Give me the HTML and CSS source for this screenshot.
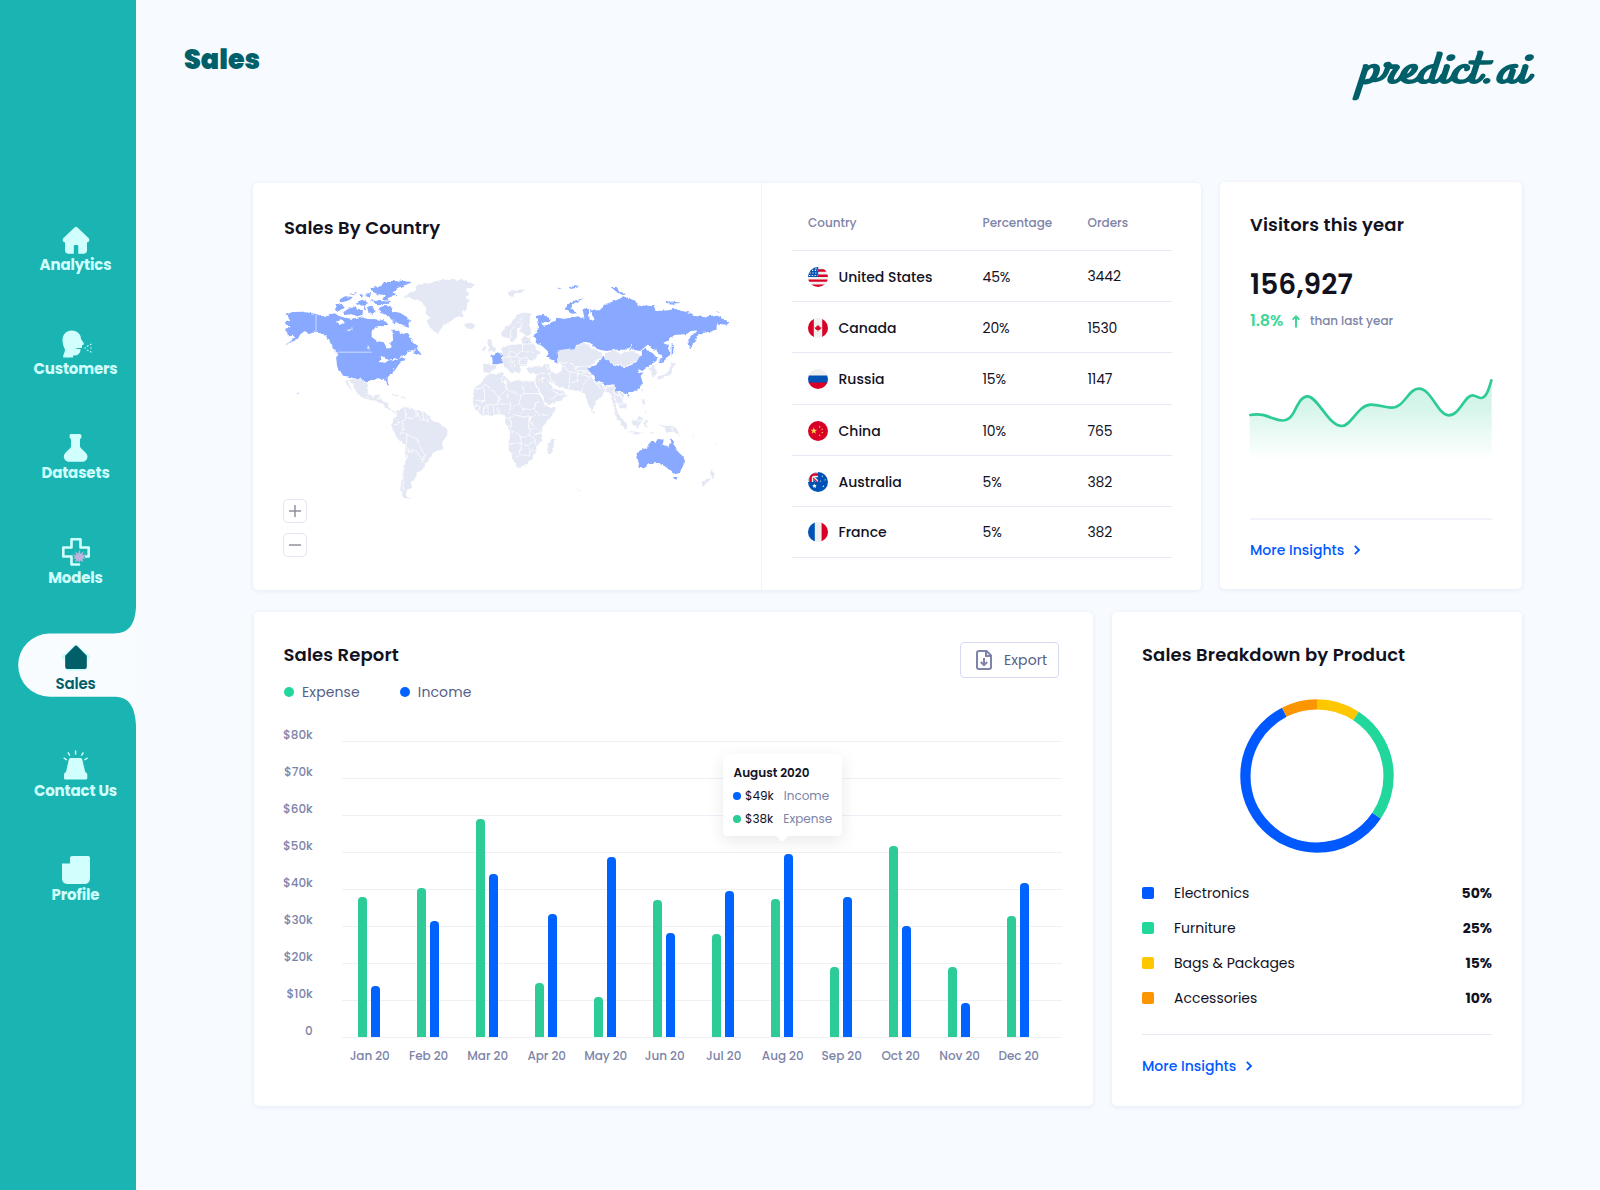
FILE: index.html
```html
<!DOCTYPE html>
<html lang="en">
<head>
<meta charset="utf-8">
<title>Sales - predict.ai</title>
<link rel="stylesheet" href="styles.css">
</head>
<body>
<div class="app">
  <nav class="sidebar">
    <a class="nav-item">
      <svg class="nav-icon" viewBox="0 0 28 28"><path d="M12.8 1.2Q14 .2 15.2 1.2L27 12.6Q28.2 14.6 26.2 16.2H25V25Q24.6 27.6 22 27.8H16.3V20Q16 19 15 19H13Q12 19 11.8 20V27.8H6Q3.4 27.6 3 25V16.2H1.8Q-.2 14.6 1 12.6Z"/></svg>
      <span>Analytics</span>
    </a>
    <a class="nav-item">
      <svg class="nav-icon" viewBox="0 0 28 28"><path d="M9.5.5C15 .3 19 4 19 9L22 13.5Q22 15 20 15.3V18H14.5V19H18.5Q18.8 22 16.5 24.3Q14.5 25.8 11 25.5V27.5H1.2C1 24 3.6 22 2.8 19C1.2 16 .5 13 .5 9.5C1 4 4.5.7 9.5.5Z"/><path class="spray" d="M22.5 18h1.5M25 16.5l1.5-1M25 20l1.5.8M28 14.8l1.5-.7M28.2 18h1.5M28 21.5l1.5.8"/></svg>
      <span>Customers</span>
    </a>
    <a class="nav-item">
      <svg class="nav-icon" viewBox="0 0 28 28"><path d="M8.5 0H18Q19.5.3 19.5 2.5T18 5V12.5Q18.6 14 20 15.2C23 18 25.6 20 25.5 22.5C25.3 26 23 27.8 20 27.8H7.5C4.5 27.8 2 26 1.8 22.5C1.8 20 4 18 7 15.2Q8.7 14 9 12.5V5Q7.5 4.8 7.5 2.5T8.5 0Z"/></svg>
      <span>Datasets</span>
    </a>
    <a class="nav-item">
      <svg class="nav-icon" viewBox="0 0 28 28"><path class="cross" d="M17 26.5H9.5V18.5H1.3V9.5H9.5V1.3H18.5V9.5H26.7V18.5H24"/><path class="leaf" d="M17.3 11.5 18.6 16 21.6 13.2 20.5 17.2 24.4 16.2 21.4 19.2 23.6 20.6 20.2 21 21.2 24 18 22.6 17.2 26 16.4 22.6 13 24.2 14.2 21 10.8 20.6 13.2 19.2 10.4 16.2 14.2 17.2 13.2 13.2 16.2 16Z"/></svg>
      <span>Models</span>
    </a>
    <a class="nav-item active">
      <svg class="notch" viewBox="0 0 118 128"><path d="M118 0C117.6 20 113 31.5 95 31.5H31.5A31.6 31.6 0 0 0 31.5 94.7H97C113 95 117.4 108 118 127Z"/></svg>
      <svg class="nav-icon" viewBox="0 0 28 28"><path class="halo" d="M14 0 28.5 12.3 27 15.5 25 16V24Q24.6 26.5 22 26.8H6Q3.4 26.5 3 24V16L1 15.5-.5 12.3Z"/><path d="M13.1 1.8Q14 1 14.9 1.8L24.8 11.8V23Q24.6 24.8 22.8 25H5.2Q3.4 24.8 3.2 23V11.8Z"/></svg>
      <span>Sales</span>
    </a>
    <a class="nav-item">
      <svg class="nav-icon" viewBox="0 0 28 28"><path d="M8.5 7H18.5Q20 7.2 20.4 9L23.2 21Q25.3 21.3 25.3 24V27Q25.3 28.5 23.8 28.5H3.5Q2 28.5 2 27V24Q2 21.3 4 21L6.7 9Q7.1 7.2 8.5 7Z"/><path class="rays" d="M13.6-.4v4M19.4 4.6l2-3.2M22.4 9l3.2-2.2M7.9 4.6l-2-3.2M4.9 9 1.7 6.8"/></svg>
      <span>Contact Us</span>
    </a>
    <a class="nav-item">
      <svg class="nav-icon" viewBox="0 0 28 28"><path d="M10 0H26.2Q28 .2 28 2V22.5Q27.6 27.6 23 28H5Q.4 27.6 0 23V7.5H8V1.8Q8.2.2 10 0Z"/></svg>
      <span>Profile</span>
    </a>
  </nav>

  <main class="content">
    <header class="topbar">
      <h1>Sales</h1>
      <div class="logo">predict.ai</div>
    </header>

    <div class="row">
      <section class="card country-card">
        <div class="map-pane">
          <h2>Sales By Country</h2>
          <svg class="map" viewBox="40 50 1350 670">
            <defs>
              <filter id="coast" filterUnits="userSpaceOnUse" x="30" y="40" width="1370" height="690" color-interpolation-filters="sRGB">
                <feTurbulence type="fractalNoise" baseFrequency=".07" numOctaves="2" seed="4" result="n"/>
                <feDisplacementMap in="SourceGraphic" in2="n" scale="12" xChannelSelector="R" yChannelSelector="G"/>
              </filter>
            </defs>
            <g filter="url(#coast)">
              <g class="land">
                <path d="M402 108 436 88 440 74 480 66 520 58 575 58 620 74 590 86 600 100 588 108 598 122 588 132 592 146 580 152 582 166 556 172 540 184 520 196 505 220 488 210 474 188 472 180 482 172 468 160 470 144 458 126 432 118Z"/>
                <path d="M582 192 600 188 616 194 612 202 596 204ZM656 236 666 240 668 256 680 266 672 273 654 273 660 262 652 250ZM638 262 649 257 648 269 636 271Z"/>
                <path d="M240 358 270 355 282 362 292 374 294 400 310 410 318 403 333 404 326 414 340 420 356 428 358 442 372 454 382 451 378 458 362 452 346 440 340 430 314 422 300 418 276 412 256 394 250 376ZM228 358 234 360 240 378 250 390 246 391 232 374Z"/>
                <path d="M358 400 376 402 390 408 374 407ZM394 408 410 411 398 413ZM418 412l8 1-6 1Z"/>
                <path d="M380 450 404 440 440 446 472 462 490 480 530 504 536 518 522 540 520 566 490 578 480 600 466 610 456 634 440 640 440 656 424 664 426 676 412 690 408 704 424 716 404 712 392 690 398 640 406 600 408 552 386 540 366 500 370 480 382 468Z"/>
                <path d="M640 310 681 313 672 328 656 338 642 335Z"/>
                <g transform="translate(660)">
                  <path d="M54 94 74 92 78 88 108 88 96 98 80 98 72 110 60 104Z"/>
                  <path d="M36 214 60 190 80 168 104 156 122 160 120 178 124 214 110 226 92 218 94 200 82 206 82 230 70 244 60 244 60 230 40 232Z"/>
                  <path d="M34 264 56 254 98 252 96 238 104 230 118 232 126 250 134 256 136 266 156 278 138 292 128 300 112 300 112 316 94 320 90 340 78 336 58 308 54 308 76 332 66 342 48 318 36 308 40 290 38 276Z"/>
                  <path d="M110 324 128 318 152 318 176 310 184 334 206 340 216 330 214 312 206 306 204 270 254 264 276 250 300 256 334 278 338 288 320 302 300 318 294 330 306 350 316 366 350 378 376 374 382 396 404 400 400 418 412 434 408 446 396 446 386 430 378 426 376 440 388 462 376 454 368 416 358 396 346 394 318 426 306 452 298 436 286 406 276 390 242 388 210 382 190 368 178 366 194 386 216 392 232 404 206 424 172 434 160 412 136 364 142 342 116 338Z"/>
                  <path d="M309 450 316 458 311 462ZM344 280 376 270 392 280 420 272 454 282 440 304 408 318 372 310 350 296Z"/>
                  <path d="M-50 408-48 384-30 372-14 350-4 342 44 338 48 352 68 364 76 360 104 362 132 364 138 376 150 402 162 424 174 444 198 440 196 452 178 478 160 494 158 520 158 542 140 556 140 574 126 596 110 614 82 622 76 608 66 584 56 552 60 524 56 500 46 490 48 470 36 462 0 464-26 464-48 440Z"/>
                  <path d="M174 548 194 534 192 556 184 578 174 578Z"/>
                  <path d="M374 450 396 472 412 494 410 508 396 496 380 468ZM412 512 440 514 466 520 440 520ZM424 480 440 476 454 466 458 480 446 500 430 498ZM464 484 478 478 468 490 472 502 464 498ZM456 416 464 418 466 434 460 432ZM464 448 474 456 474 464ZM508 490 530 494 552 498 572 524 550 514 530 516 524 502ZM480 516 492 516 484 522Z"/>
                  <path d="M546 306 560 310 548 320 550 334 534 348 506 358 504 350 530 340 540 326ZM478 322 492 316 502 336 496 348 488 344Z"/>
                  <path d="M660 626 676 640 668 654 662 644ZM636 668 662 650 654 664 640 676ZM606 522l10 8-4 0ZM674 550l6-2-4 5ZM628 568l8 3ZM262 687h8l-4 3Z"/>
                </g>
              </g>
              <g class="borders">
                <path d="M404 440 410 470 398 484 376 490M410 470 424 476 444 466 440 448M444 466 452 480 476 478M458 454 462 480M472 464 474 482M398 484 400 504 394 516 412 522 410 552M412 522 442 536 450 562 464 580 466 592 454 596 440 572 416 572 410 556M416 572 406 600 400 640 402 690M466 592 456 604 468 614M288 404 300 418M318 418 328 412M342 422 356 428"/>
                <g transform="translate(660)">
                  <path d="M-48 384H-18L-14 372 28 408 48 390 44 366 48 352M-18 384-12 424-44 420M28 408 22 432-6 434-18 444-30 436-50 440M44 340 36 358 48 374M48 362 52 388 94 406 102 402V362M102 400H148M94 406 88 430 100 446 94 468 70 462 58 474 48 470M28 408 30 432 52 430 64 436 54 400M64 436 56 460M22 432 28 462M10 434 14 462M-6 434-4 462M-18 444-20 464M-30 440-34 456M88 430 66 446M100 446 134 448 138 428 152 424M134 448 150 466 176 460M122 470 124 490 158 520M94 468 124 470 138 466M58 474 66 484 62 512 88 520 92 530 120 528 116 490 124 470M58 550H96L110 556 138 542M92 530 96 550 90 584 78 590M110 556 122 568 116 584 92 584M122 568 140 572M120 528 136 534 136 556M120 500 136 520 158 518"/>
                  <path d="M60 240 64 210 84 184 104 166M98 200 92 180M56 254 62 274 54 288 40 292M62 274 84 278 98 274 98 252M84 278 78 290 54 288M98 274 132 276M78 290 90 296 112 290 118 302M90 296 92 312 112 314M72 300 76 320M104 256 98 252 126 250M62 292 66 308"/>
                  <path d="M140 342 178 336 170 318M178 336 184 358 196 370M164 350 180 366M142 362 164 350M184 386 206 402 232 404M178 420 206 402M206 306 240 306 260 322 308 318M214 312 242 338 268 340 300 334M242 338 236 386M268 340 262 362 244 366M302 350 284 368 276 390M268 340 302 350M240 306 262 330 290 332M316 366 340 386 370 376M346 378 350 394M376 374 372 400 392 408 404 430M372 400 380 426M384 398 402 414M388 430 408 432M156 348 160 366"/>
                  <path d="M436 476 456 482M550 498V514"/>
                </g>
              </g>
              <g class="sold">
                <path d="M46 164 68 155 100 154 140 161V217L120 217 104 213 92 222 84 236 60 248 44 253 66 243 78 230 70 226 56 228 50 216 46 205 64 200 48 190 44 183 62 180 58 172Z"/>
                <path d="M138 162 160 168 185 160 200 164 225 172 250 176 270 170 295 176 320 177 332 184 330 196 318 200 306 214 306 230 322 242 342 246 352 264 364 264 362 248 370 238 368 208 385 208 395 222 412 218 424 240 444 256 446 266 414 272 408 282 388 292 350 300 348 290 325 286 305 277H205L190 262 178 240 165 222 138 216ZM430 276 444 266 456 284 446 282Z"/>
                <path d="M204 275H305L328 284 334 290 330 305 345 308 358 300 388 294 404 290 404 298 388 314 372 326 370 336 354 350 354 366 358 376 352 374 346 356 322 354 310 362 294 362 294 372 282 360 270 354 250 354 225 346 210 334 202 318 200 296Z"/>
                <path d="M302 84 330 78 345 66 380 60 428 66 400 76 382 84 372 96 380 106 356 112 350 122 338 118 345 104 325 102 308 94ZM198 134 215 130 225 142 210 152 196 150ZM220 152 240 144 258 138 262 148 280 150 278 164 262 168 245 162 226 164ZM328 142 350 134 368 140 366 152 392 158 408 168 426 182 416 188 418 202 400 198 388 190 370 178 352 164 332 158ZM322 186 340 178 354 194 340 198 326 196ZM366 176 382 188 374 192ZM208 118 226 108 250 110 236 122 214 126ZM238 100 260 98 250 104ZM258 126 278 118 296 128 276 136ZM290 96 304 100 300 112 290 108ZM304 120 330 122 360 124 358 130 320 132ZM292 140 304 136 318 150 308 164 296 154ZM280 136 290 144 284 150ZM270 100 284 104 276 110ZM82 396l6 4-2 3ZM70 389l5 2Z"/>
                <path d="M658 290 668 285 674 285 680 274 700 284 696 298 700 308 682 312 668 310 668 296Z"/>
                <g transform="translate(660)">
                  <path d="M138 166 162 164 184 178 178 186 158 184 164 196 180 192 196 182 200 172 226 176 262 168 284 172 280 152 290 142 298 150 300 182 316 178 302 150 330 150 350 130 380 120 404 108 438 122 442 134 492 138 500 152 540 150 550 146 604 158 610 166 642 170 680 164 720 186 708 196 682 192 680 208 664 214 636 218 622 224 614 246 600 266 596 238 622 210 610 212 584 222 556 224 536 236 524 248 538 256 540 286 520 304 506 306 516 292 500 270 470 256 452 272 430 268 412 268 380 268 350 272 330 268 300 250 270 246 254 264 204 270 206 308 190 300 170 292 178 276 158 258 140 246 134 230 142 212 146 196Z"/>
                  <path d="M224 150 236 130 258 120 284 114 254 128 240 142 262 158 250 160ZM546 252 552 254 550 288 546 286ZM362 80 384 84 388 94 408 98 400 104 378 96 374 88ZM198 82 218 84 206 86ZM236 80 258 78 270 80 244 86ZM528 122 552 124 576 127 550 130 530 128ZM680 153l12 1-8 2ZM108 246l9 2-6 2Z"/>
                  <path d="M292 326 320 314 330 298 342 286 352 298 372 313 408 321 440 308 446 292 458 284 456 272 468 262 480 274 508 284 500 302 476 318 458 332 446 326 448 338 462 336 452 348 460 366 446 386 430 394 414 402 400 394 378 396 374 372 354 374 316 362 310 344ZM456 386 460 384 457 396ZM412 404 420 406 415 412Z"/>
                  <path d="M440 576 466 564 476 556 486 544 498 546 504 536 522 538 518 552 536 560 546 534 552 552 564 570 582 588 586 604 572 634 552 640 536 626 526 618 504 608 480 612 462 624 448 622 446 604ZM553 650 567 650 561 662Z"/>
                </g>
              </g>
              <g class="lakes">
                <path d="M198 184 212 180 224 184 208 192ZM228 210 250 204 234 216ZM290 252 296 256 300 268 294 266ZM330 288 350 292 356 300 342 304 334 298ZM362 298 384 292 372 302Z"/>
                <path d="M1070 266 1078 262 1088 246 1084 264 1074 272ZM1128 256 1144 258 1152 272 1174 284 1174 292 1158 288 1142 272Z"/>
              </g>
            </g>
            <path class="us-line" d="M139 164V218M206 275.5H306"/>
          </svg>
          <div class="zoom">
            <button><svg viewBox="0 0 12 12"><path d="M0 6H12M6 0V12"/></svg></button>
            <button><svg viewBox="0 0 12 12"><path d="M0 6H12"/></svg></button>
          </div>
        </div>
        <div class="table">
          <div class="tr th"><span>Country</span><span>Percentage</span><span>Orders</span></div>
          <div class="tr"><span class="name"><svg class="flag" viewBox="0 0 20 20"><path fill="#f0f0f0" d="M0 0H20V20H0Z"/><path fill="#d80027" d="M9 2.2H20V4.8H9ZM9 7.4H20V10H9ZM0 12.4H20V14.8H0ZM0 17.4H20V20H0Z"/><path fill="#0052b4" d="M0 0H10.2V10H0Z"/><path stroke="#f0f0f0" stroke-width="1.1" stroke-dasharray="1.3 1.5" d="M4 3.4H10M1.5 6H10M1 8.5H10M8 1V3"/></svg>United States</span><span>45%</span><span class="raised">3442</span></div>
          <div class="tr"><span class="name"><svg class="flag" viewBox="0 0 20 20"><path fill="#f0f0f0" d="M0 0H20V20H0Z"/><path fill="#d80027" d="M0 0H5.8V20H0ZM14.2 0H20V20H14.2ZM10 6.5 11 8.4 12 7.9 11.7 9.5 13.6 9.2 13 10.6 11.5 12H10.4V13.4H9.6V12H8.5L7 10.6 6.4 9.2 8.3 9.5 8 7.9 9 8.4Z"/></svg>Canada</span><span>20%</span><span>1530</span></div>
          <div class="tr"><span class="name"><svg class="flag" viewBox="0 0 20 20"><path fill="#f0f0f0" d="M0 0H20V7H0Z"/><path fill="#0052b4" d="M0 6.5H20V14H0Z"/><path fill="#d80027" d="M0 13.6H20V20H0Z"/></svg>Russia</span><span>15%</span><span>1147</span></div>
          <div class="tr"><span class="name"><svg class="flag" viewBox="0 0 20 20"><path fill="#d80027" d="M0 0H20V20H0Z"/><path fill="#ffda44" d="M5.8 6.3 6.6 8.8H9.2L7.1 10.3 7.9 12.8 5.8 11.3 3.7 12.8 4.5 10.3 2.4 8.8H5ZM11.2 4.8l1.6 1.2-1.8.7ZM14 7.3l1.2 1.5-1.8-.1ZM13.5 11l1.8.3-1.3 1.3ZM11 13.5l1.8.8-1.6 1Z"/></svg>China</span><span>10%</span><span>765</span></div>
          <div class="tr"><span class="name"><svg class="flag" viewBox="0 0 20 20"><path fill="#0052b4" d="M0 0H20V20H0Z"/><path fill="#f0f0f0" d="M0 0H10V10H0Z"/><path fill="#d80027" d="M3.8 10V5.2Q4.3 4 5.5 3.8H10V1.2H5Q1.6 2 1.3 5V10ZM5.5 5.5 10 10H8.4L4.8 6.3Z"/><path fill="#0052b4" d="M7 5.3H10V8ZM5.3 7V10H8Z"/><path fill="#f0f0f0" d="M6.2 11.6 7 13 8.6 13 7.8 14.3 8 15.8 6.4 15.2 5 15.6 5.2 14.2 4.3 13 5.7 12.9ZM14.5 3.3l.6 1.4-1.5 0ZM17 7l.9 1-1.5.4ZM12.5 8.3l.8 1.2-1.6.1ZM15.3 13.2l1 1.6-1.9.1Z"/></svg>Australia</span><span>5%</span><span>382</span></div>
          <div class="tr"><span class="name"><svg class="flag" viewBox="0 0 20 20"><path fill="#f0f0f0" d="M0 0H20V20H0Z"/><path fill="#0052b4" d="M0 0H6.8V20H0Z"/><path fill="#d80027" d="M13.6 0H20V20H13.6Z"/></svg>France</span><span>5%</span><span>382</span></div>
        </div>
      </section>

      <section class="card visitors-card">
        <h2>Visitors this year</h2>
        <div class="big">156,927</div>
        <div class="delta"><b>1.8%</b><svg viewBox="0 0 8 13"><path d="M4 12.5V1.5M.7 4.6 4 1.3 7.3 4.6"/></svg><span>than last year</span></div>
        <svg class="spark" viewBox="118 590 732 260">
          <defs><linearGradient id="fade" x1="0" y1="0" x2="0" y2="1"><stop offset="0" stop-color="#2ccb97" stop-opacity=".24"/><stop offset=".35" stop-color="#2ccb97" stop-opacity=".19"/><stop offset="1" stop-color="#2ccb97" stop-opacity="0"/></linearGradient></defs>
          <path fill="url(#fade)" d="M120 705C150 698 170 706 190 714S235 728 250 700C264 674 274 648 293 648C325 648 355 737 397 737C425 737 445 673 484 673C510 673 525 682 545 682C585 682 595 625 628 625C665 625 685 705 717 705C750 705 765 645 788 645C800 645 802 653 813 653C830 653 838 625 846 600V840H120Z"/>
          <path class="spark-line" d="M122 704C150 698 170 706 190 714S235 728 250 700C264 674 274 648 293 648C325 648 355 737 397 737C425 737 445 673 484 673C510 673 525 682 545 682C585 682 595 625 628 625C665 625 685 705 717 705C750 705 765 645 788 645C800 645 802 653 813 653C830 653 838 625 845 600"/>
        </svg>
        <a class="more">More Insights<svg viewBox="0 0 6 10"><path d="M.8.8 5 5 .8 9.2"/></svg></a>
      </section>
    </div>

    <div class="row lower">
      <section class="card report-card">
        <div class="report-head">
          <div>
            <h2>Sales Report</h2>
            <div class="legend"><span class="dot green"></span><span>Expense</span><span class="dot blue"></span><span>Income</span></div>
          </div>
          <button class="export"><svg viewBox="0 0 16 20"><path d="M10.5 1H3Q1 1 1 3V17Q1 19 3 19H13Q15 19 15 17V5.5Z"/><path d="M10 1V6H15M8 8V15M4.8 12 8 15.1 11.2 12"/></svg>Export</button>
        </div>
        <div class="chart">
          <div class="y-axis"><span>$80k</span><span>$70k</span><span>$60k</span><span>$50k</span><span>$40k</span><span>$30k</span><span>$20k</span><span>$10k</span><span>0</span></div>
          <div class="plot">
            <div class="bars">
              <div class="pair"><i style="height:140px"></i><i style="height:51px"></i></div>
              <div class="pair"><i style="height:149px"></i><i style="height:116px"></i></div>
              <div class="pair"><i style="height:218px"></i><i style="height:163px"></i></div>
              <div class="pair"><i style="height:54px"></i><i style="height:123px"></i></div>
              <div class="pair"><i style="height:40px"></i><i style="height:180px"></i></div>
              <div class="pair"><i style="height:137px"></i><i style="height:104px"></i></div>
              <div class="pair"><i style="height:103px"></i><i style="height:146px"></i></div>
              <div class="pair"><i style="height:138px"></i><i style="height:183px"></i></div>
              <div class="pair"><i style="height:70px"></i><i style="height:140px"></i></div>
              <div class="pair"><i style="height:191px"></i><i style="height:111px"></i></div>
              <div class="pair"><i style="height:70px"></i><i style="height:34px"></i></div>
              <div class="pair"><i style="height:121px"></i><i style="height:154px"></i></div>
            </div>
            <div class="x-axis"><span>Jan 20</span><span>Feb 20</span><span>Mar 20</span><span>Apr 20</span><span>May 20</span><span>Jun 20</span><span>Jul 20</span><span>Aug 20</span><span>Sep 20</span><span>Oct 20</span><span>Nov 20</span><span>Dec 20</span></div>
            <div class="tooltip">
              <b>August 2020</b>
              <div><span class="dot blue"></span><span>$49k</span><em>Income</em></div>
              <div><span class="dot mint"></span><span>$38k</span><em>Expense</em></div>
            </div>
          </div>
        </div>
      </section>

      <section class="card breakdown-card">
        <h2>Sales Breakdown by Product</h2>
        <svg class="donut" viewBox="-77 -77 154 154">
          <g fill="none" stroke-width="10.3" transform="rotate(-90)">
            <circle r="71.6" pathLength="360" stroke="#0059ff" stroke-dasharray="209.1 150.9" stroke-dashoffset="-123.7"/>
            <circle r="71.6" pathLength="360" stroke="#ffc700" stroke-dasharray="33 327"/>
            <circle r="71.6" pathLength="360" stroke="#22d79c" stroke-dasharray="90.7 269.3" stroke-dashoffset="-33"/>
            <circle r="71.6" pathLength="360" stroke="#fb9500" stroke-dasharray="27.2 332.8" stroke-dashoffset="-332.8"/>
          </g>
        </svg>
        <ul class="products">
          <li><i class="sq c1"></i><span>Electronics</span><b>50%</b></li>
          <li><i class="sq c2"></i><span>Furniture</span><b>25%</b></li>
          <li><i class="sq c3"></i><span>Bags &amp; Packages</span><b>15%</b></li>
          <li><i class="sq c4"></i><span>Accessories</span><b>10%</b></li>
        </ul>
        <a class="more">More Insights<svg viewBox="0 0 6 10"><path d="M.8.8 5 5 .8 9.2"/></svg></a>
      </section>
    </div>
  </main>
</div>
</body>
</html>
```

FILE: styles.css
```css
* { box-sizing: border-box; }
body { margin: 0; background: #f7faff; color: #12121f; font: 14px/20px Poppins, Inter, "Open Sans", sans-serif; }
h1, h2, ul { margin: 0; padding: 0; }
button { font: inherit; background: #fff; padding: 0; }
svg { display: block; overflow: visible; }
.app { display: flex; width: 1600px; height: 1190px; }

/* Sidebar */
.sidebar { width: 136px; background: #1ab5b2; padding: 225.5px 0 0 15.5px; display: flex; flex-direction: column; gap: 54.3px; }
.nav-item { width: 120px; height: 50px; display: flex; flex-direction: column; align-items: center; position: relative; color: #d0fffe; font-size: 15px; font-weight: 700; line-height: 22px; letter-spacing: -.15px; }
.nav-icon { width: 28px; height: 28px; flex: none; fill: #d0fffe; position: relative; }
.nav-item > span { position: relative; }
.nav-item:nth-child(n+4) > span { margin-top: 1px; }
.nav-item:last-child { margin-top: 1px; }
.nav-item:last-child > span { margin-top: 0; }
.spray { fill: none; stroke: #d0fffe; stroke-width: 1.1; }
.rays { fill: none; stroke: #d0fffe; stroke-width: 1.4; }
.cross { fill: none; stroke: #d0fffe; stroke-width: 2.6; stroke-linejoin: round; stroke-linecap: round; }
.leaf { fill: #bcb4dc; }
.active { color: #005f68; margin: 1.8px 0 2px; font-weight: 600; }
.active .nav-icon { fill: #005f68; }
.active .halo { fill: #c8fdfc; }
.notch { position: absolute; left: 2.5px; top: -42.5px; width: 118.5px; height: 128px; fill: #f9fcff; }

/* Page */
.content { width: 1386px; padding-left: 117px; }
.topbar { height: 182px; margin-left: -69px; padding-top: 43px; display: flex; justify-content: space-between; color: #005f68; }
h1 { font-size: 27px; line-height: 34px; font-weight: 900; letter-spacing: 0; }
.logo { font: italic 700 45px/54px "Grand Hotel", Damion, Pacifico, cursive; letter-spacing: .6px; margin-right: -5px; transform: scaleX(1.3); transform-origin: 100% 50%; }
.row { display: flex; gap: 19px; align-items: flex-start; }
.lower { margin: 22px 0 0 1px; }
.card { background: #fff; border-radius: 5px; box-shadow: 0 1px 5px rgba(30, 60, 120, .08); flex: none; }
h2 { font-size: 18px; line-height: 28px; font-weight: 600; letter-spacing: .12px; }

.country-card { width: 948px; height: 407px; margin-top: 1px; display: flex; }
.map-pane { width: 509px; border-right: 1px solid #f1f2fa; padding: 31px 0 0 30px; }
.map-pane h2 { padding-left: 1px; }
.map { width: 450px; height: 223.3px; margin-top: 35px; }
.land { fill: #e4e7f4; }
.sold { fill: #88a9ff; }
.borders { fill: none; stroke: #fff; stroke-width: 2.5; }
.lakes { fill: #fff; }
.us-line { fill: none; stroke: #cfdcff; stroke-width: 3; }
.zoom { display: grid; gap: 10px; margin: -1px 0 0 0; width: 24px; }
.zoom button { width: 24px; height: 24px; border: 1px solid #e4e6f3; border-radius: 5px; display: grid; place-items: center; }
.zoom svg { width: 12px; height: 12px; stroke: #92929d; stroke-width: 1.5; }

.table { width: 380px; margin-left: 30px; }
.tr { display: grid; grid-template-columns: 174.5px 105px auto; padding: 2px 0 0 16px; height: 51.2px; border-bottom: 1px solid #e6e8f5; align-items: center; font-size: 14px; letter-spacing: -.15px; }
.tr:last-child { padding-top: 0; }
.tr.th { height: 68px; padding-top: 12px; color: #7d84a8; font-size: 12px; font-weight: 500; letter-spacing: 0; }
.raised { margin-top: -2px; }
.name { display: flex; align-items: center; gap: 10.5px; font-weight: 500; letter-spacing: 0; }
.flag { width: 20px; height: 20px; border-radius: 50%; overflow: hidden; }

.visitors-card { width: 302px; height: 407px; padding: 29px 30px 0; }
.big { font-size: 28px; line-height: 40px; font-weight: 600; margin-top: 26px; letter-spacing: .1px; }
.delta { display: flex; align-items: center; margin-top: 5px; height: 22px; color: #3dd598; }
.delta b { font-size: 16px; font-weight: 600; width: 42px; letter-spacing: -.1px; }
.delta svg { width: 8px; height: 13px; fill: none; stroke: #3dd598; stroke-width: 2; }
.delta span { color: #7d84a8; font-size: 12px; font-weight: 500; margin-left: 10px; letter-spacing: -.05px; }
.spark { width: 244px; height: 86.7px; margin: 44.5px 0 0 -.7px; }
.spark-line { fill: none; stroke: #2ccb97; stroke-width: 8; stroke-linecap: round; }
.more { display: flex; align-items: center; gap: 10px; border-top: 1px solid #e6e8f5; color: #0059ff; font-size: 14px; font-weight: 500; padding-top: 21px; }
.more svg { width: 6px; height: 10px; fill: none; stroke: #0059ff; stroke-width: 1.8; }
.visitors-card .more { margin-top: 54.5px; border-top-width: 2px; border-color: #f2f3fa; padding-top: 20px; }

.report-card { width: 839px; height: 494px; padding: 29px 31px 0 29px; }
.report-card h2 { padding-left: .5px; }
.report-head { display: flex; justify-content: space-between; height: 75px; padding-right: 3px; }
.legend { display: flex; align-items: center; margin: 13px 0 0 1px; line-height: 20px; color: #565f88; letter-spacing: .12px; }
.legend .dot { margin-right: 8px; }
.legend .dot.blue { margin-left: 40px; }
.dot { width: 10px; height: 10px; border-radius: 50%; flex: none; }
.green { background: #22d79c; }
.mint { background: #2ccb97; }
.blue { background: #0062ff; }
.export { width: 99px; height: 36px; margin-top: 1px; border: 1px solid #d5daee; border-radius: 4px; color: #565f88; display: flex; align-items: center; gap: 12px; padding-left: 15px; letter-spacing: .1px; }
.export svg { width: 16px; height: 20px; fill: none; stroke: #7d84a8; stroke-width: 2; }
.chart { display: flex; gap: 31px; color: #7d84a8; font-size: 12px; }
.y-axis { width: 28.4px; display: grid; grid-auto-rows: 37px; line-height: 37px; justify-items: end; font-weight: 500; letter-spacing: -.05px; }
.plot { width: 720px; height: 350px; margin-top: 25px; position: relative; }
.bars { height: 297px; padding-bottom: 1px; display: flex; background: repeating-linear-gradient(#efeff6 0 1px, transparent 1px 37px); }
.pair { width: 59px; display: flex; align-items: flex-end; gap: 4.4px; padding-left: 16px; flex: none; }
.pair i { width: 8.6px; background: #2ccb97; border-radius: 4px 4px 0 0; }
.pair i + i { background: #0062ff; }
.x-axis { display: grid; grid-template-columns: repeat(12, 59px); margin: 8px 0 0 -2.2px; text-align: center; font-weight: 500; letter-spacing: -.05px; }
.tooltip { position: absolute; left: 380.6px; top: 13px; width: 119px; height: 82px; background: #fff; border-radius: 4px; box-shadow: 0 5px 16px rgba(40, 40, 80, .1); padding: 9px 0 0 10px; color: #12121f; }
.tooltip b { display: block; font-size: 12px; font-weight: 600; padding-left: .6px; margin-bottom: 1px; }
.tooltip div { display: flex; align-items: center; height: 23px; }
.tooltip .dot { width: 8px; height: 8px; margin-right: 4px; }
.tooltip em { font-style: normal; color: #7d84a8; margin-left: 10px; }
.tooltip::after { content: ""; position: absolute; left: 53px; bottom: -6px; border: 6.5px solid transparent; border-top-color: #fff; border-bottom: 0; }

.breakdown-card { width: 410px; height: 494px; padding: 29px 30px 0; }
.donut { width: 154px; height: 154px; margin: 30px auto 0 98.4px; }
.products { list-style: none; margin-top: 22px; display: grid; grid-auto-rows: 35px; }
.products li { display: flex; align-items: center; }
.products b { margin-left: auto; font-weight: 700; }
.sq { width: 12px; height: 12px; border-radius: 2px; margin-right: 20px; }
.c1 { background: #0059ff; }
.c2 { background: #22d79c; }
.c3 { background: #ffc700; }
.c4 { background: #fb9500; }
.breakdown-card .more { margin-top: 19px; }
```
